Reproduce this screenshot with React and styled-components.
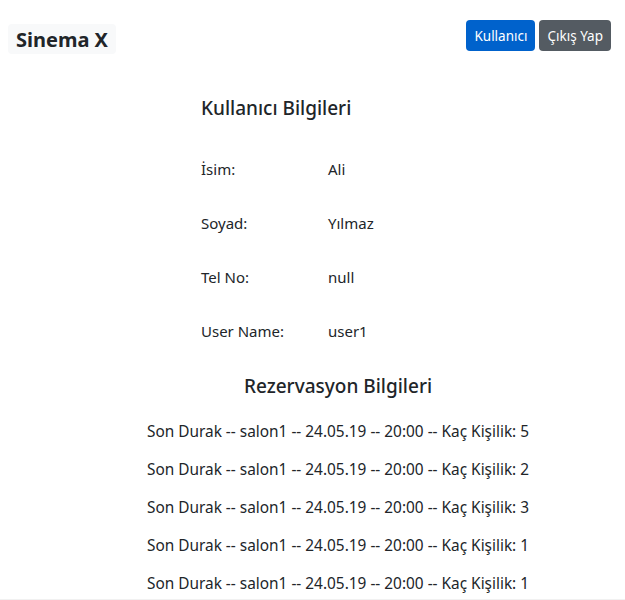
import React from 'react';
import styled, { createGlobalStyle } from 'styled-components';

const GlobalStyle = createGlobalStyle`
  body {
    margin: 0;
    background: #fff;
    color: #212529;
    font-family: "Noto Sans", "Open Sans", sans-serif;
  }
`;

const user = [
  ['İsim:', 'Ali'],
  ['Soyad:', 'Yılmaz'],
  ['Tel No:', 'null'],
  ['User Name:', 'user1']
];

const reservations = [5, 2, 3, 1, 1].map(count => ({
  film: 'Son Durak',
  salon: 'salon1',
  date: '24.05.19',
  time: '20:00',
  count
}));

function App() {
  return (
    <Page>
      <GlobalStyle />
      <Navbar>
        <Brand>Sinema X</Brand>
        <Actions>
          <Button variant='primary'>Kullanıcı</Button>
          <Button variant='secondary'>Çıkış Yap</Button>
        </Actions>
      </Navbar>
      <Main>
        <InfoBlock>
          <Title>Kullanıcı Bilgileri</Title>
          <InfoTable>
            {user.map(([label, value]) => (
              <React.Fragment key={label}>
                <Cell>{label}</Cell>
                <Cell>{value}</Cell>
              </React.Fragment>
            ))}
          </InfoTable>
        </InfoBlock>
        <Reservations>
          <CenterTitle>Rezervasyon Bilgileri</CenterTitle>
          {reservations.map((r, i) => (
            <ResRow key={i}>
              {r.film} -- {r.salon} -- {r.date} -- {r.time} -- Kaç Kişilik: {r.count}
            </ResRow>
          ))}
        </Reservations>
      </Main>
      <Footer />
    </Page>
  );
}

const Page = styled.div`
  display: flex;
  flex-direction: column;
  min-height: 600px;
`;

const Navbar = styled.nav`
  display: flex;
  justify-content: space-between;
  align-items: flex-start;
  padding: 20px 14px 0 8px;
`;

const Brand = styled.div`
  margin-top: 4px;
  height: 30px;
  padding: 0 8px;
  display: flex;
  align-items: center;
  background: #f8f9fa;
  border-radius: 4px;
  font-size: 20px;
  font-weight: 700;
  color: #212529;
`;

const Actions = styled.div`
  display: flex;
  gap: 4px;
`;

const Button = styled.button`
  height: 31px;
  padding: 0 8px;
  border: none;
  border-radius: 4px;
  font-family: inherit;
  font-size: 13.5px;
  color: #fff;
  background: ${p => (p.variant === 'primary' ? '#0062cc' : '#545b62')};
`;

const Main = styled.main`
  display: flex;
  flex-direction: column;
`;

const InfoBlock = styled.section`
  margin: 0 0 0 201px;
  padding-top: 35px;
`;

const Title = styled.h4`
  margin: 0;
  height: 38px;
  line-height: 38px;
  font-size: 19px;
  font-weight: 500;
`;

const InfoTable = styled.div`
  display: grid;
  grid-template-columns: 127px auto;
  grid-auto-rows: 54px;
  margin-top: 15px;
`;

const Cell = styled.div`
  display: flex;
  align-items: center;
  font-size: 15px;
`;

const Reservations = styled.section`
  display: flex;
  flex-direction: column;
  align-items: center;
  padding-left: 51px;
  margin-top: 9px;
`;

const CenterTitle = styled(Title)`
  margin-bottom: 8px;
`;

const ResRow = styled.div`
  height: 38px;
  line-height: 38px;
  font-size: 15.4px;

  &:last-child {
    height: 34px;
  }
`;

const Footer = styled.footer`
  height: 2px;
  background: #f1f1f1;
`;

export default App;
